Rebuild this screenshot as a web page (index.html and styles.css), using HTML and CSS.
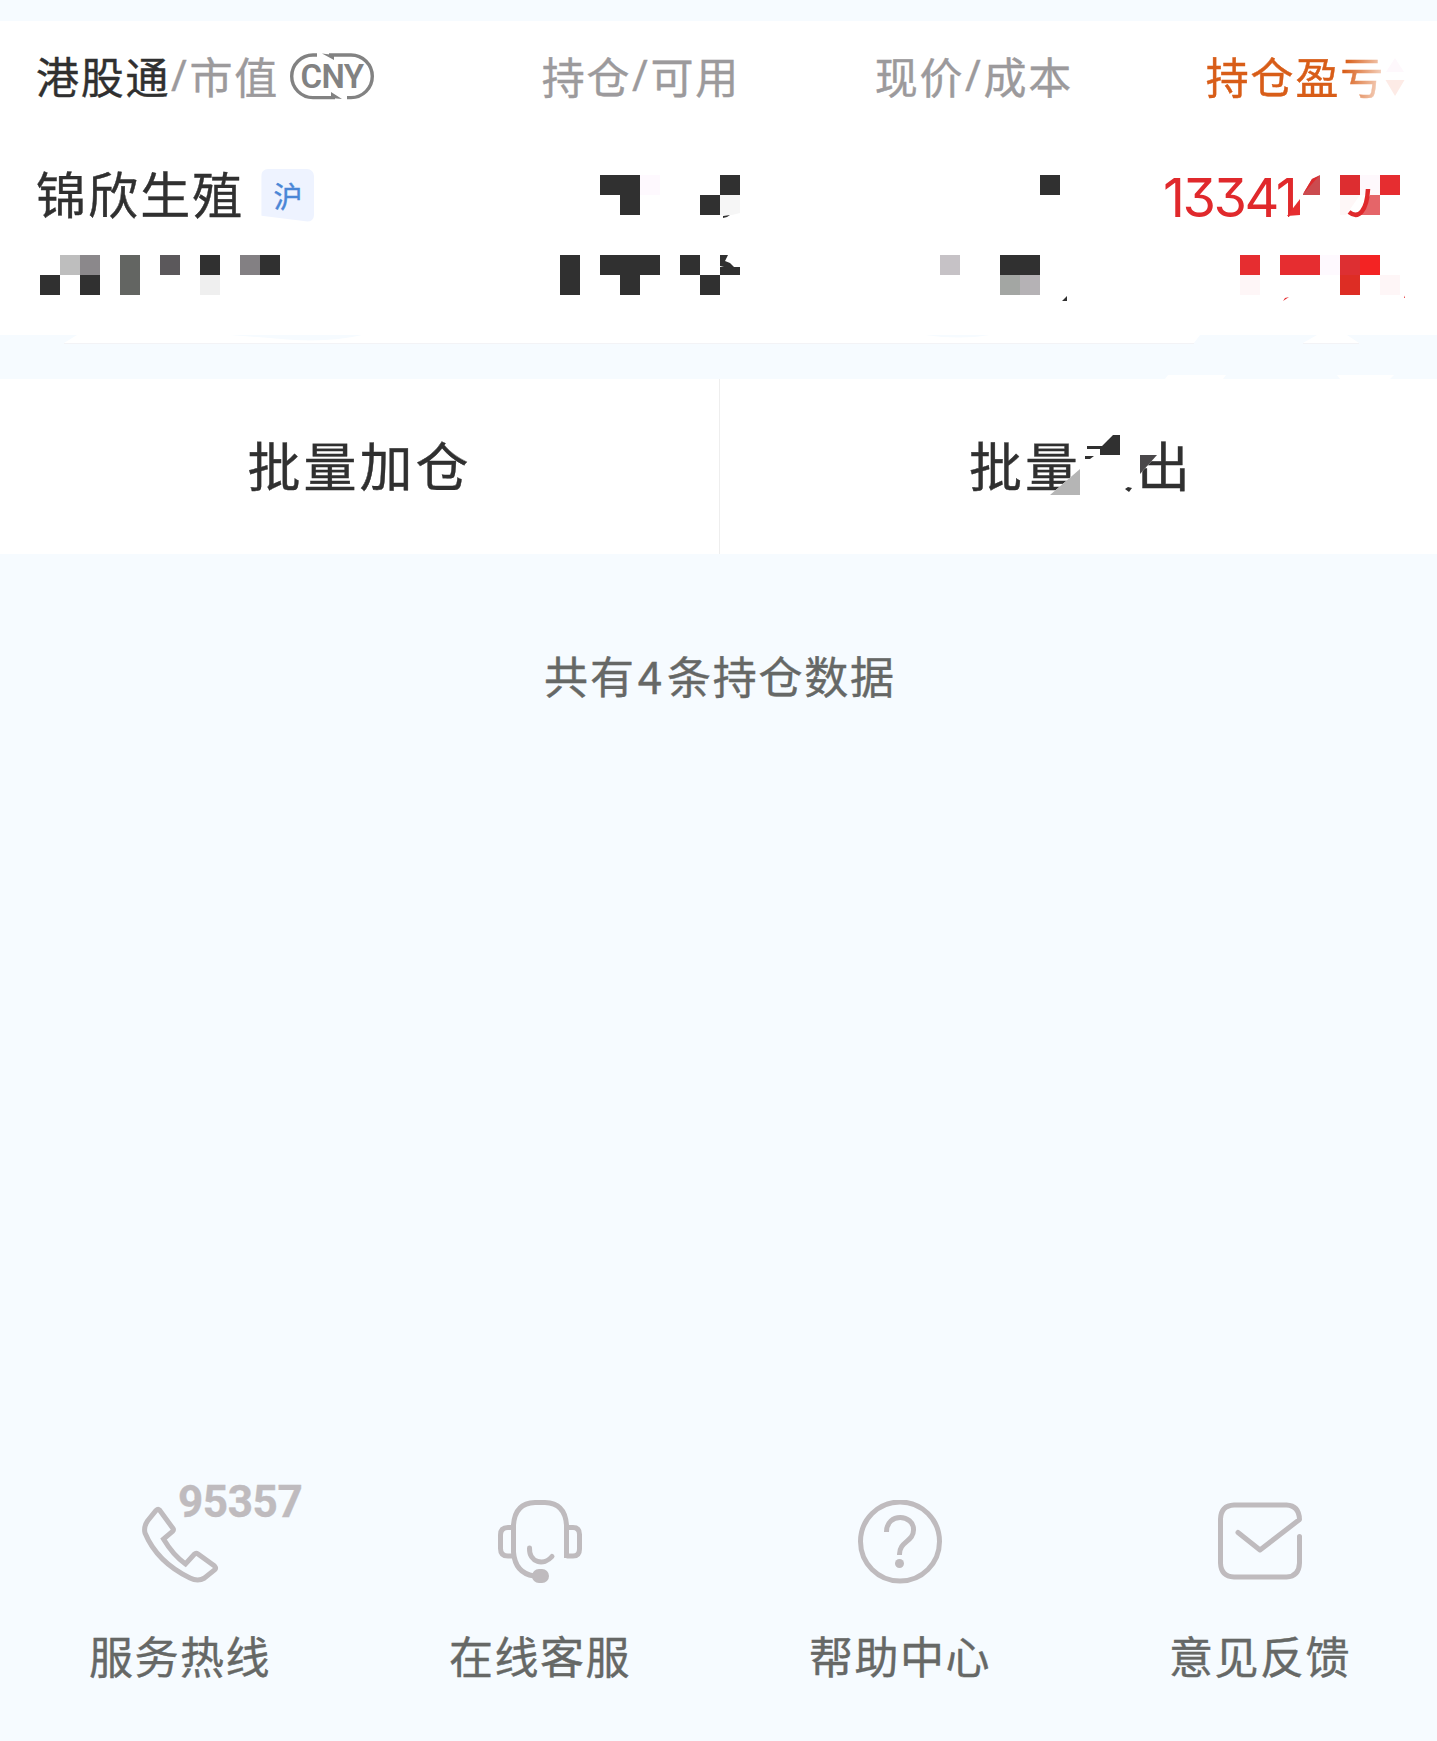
FILE: index.html
```html
<!doctype html>
<html lang="zh-CN">
    <head>
        <meta charset="utf-8">
        <title>港股通持仓</title>
        <meta name="viewport" content="width=device-width, initial-scale=1">
        <link rel="stylesheet" href="styles.css">
    </head>
    <body>
        <main>
            <section class="holdings">
                <div class="row head">
                    <div class="cell first">
                        <span class="market">港股通</span><span class="slash">/</span><span>市值</span>
                        <span class="currency">
                            <svg width="84" height="47" viewBox="0 0 84 47" fill="none" stroke="#828282" stroke-width="3.400">
                                <path d="M27 2H23A21.300 21.300 0 0 0 23 44.600H45"/>
                                <path d="M39 2H61A21.300 21.300 0 0 1 61 44.600H57"/>
                                <path d="M32 0.500L44 7V2zM52 46L41 39V45z" fill="#828282" stroke="none"/>
                            </svg>
                            <b>CNY</b>
                        </span>
                    </div>
                    <div class="cell">持仓<span class="slash">/</span>可用</div>
                    <div class="cell">现价<span class="slash">/</span>成本</div>
                    <div class="cell sorted">
                        <span class="fade">持仓盈亏</span>
                        <svg class="sort" width="20" height="40" viewBox="0 0 20 40">
                            <path d="M10 1L19 15H1z" fill="#fef8fc"/>
                            <path d="M0.500 23H19.500L10 39z" fill="#fdebe6"/>
                        </svg>
                    </div>
                </div>
                <div class="row line-one">
                    <div class="cell first">
                        <span class="name">锦欣生殖</span>
                        <span class="tag">沪</span>
                    </div>
                    <div class="cell">
                        <svg width="140" height="50" viewBox="600 170 140 50" fill="#303030">
                            <path d="M600 175h40v40h-20v-20h-20zM720 175h20v20h-20v20h-20v-20h20z"/>
                            <path d="M640 175h20v20h-20z" fill="#fef9fe"/>
                            <path d="M720 195h20v18l-8 2h-12z" fill="#f6f6f6"/>
                            <path d="M723 216l7-1-3 2-4 1z"/>
                        </svg>
                    </div>
                    <div class="cell">
                        <svg width="33" height="50" viewBox="1040 170 33 50">
                            <path d="M1040 175h20v20h-20z" fill="#303030"/>
                        </svg>
                    </div>
                    <div class="cell profit">
                        <span class="amount">13341</span>
                        <svg class="profit-cover" width="125" height="50" viewBox="1280 170 125 50">
                            <path d="M1287 220L1303 195 1320 175V220H1287z" fill="#fff"/>
                            <path d="M1303 194L1312 179 1320 175V195h-17z" fill="#cb4b4f"/>
                            <path d="M1303 194L1312 179 1319 176z" fill="#dd2a2d"/>
                            <path d="M1287 216L1300 199V215z" fill="#e62d30"/>
                            <path d="M1340 175h20v20h-20z" fill="#dd2d30"/>
                            <path d="M1380 175h20v20h-20z" fill="#e62d30"/>
                            <path d="M1360 175h20v20h-20z" fill="#fef8fc"/>
                            <path d="M1340 195h20l-14 20h-6z" fill="#fef7f7"/>
                            <path d="M1370 195h10v20h-20z" fill="#e56569"/>
                            <path d="M1349 212C1359 220 1367 210 1368 189" fill="none" stroke="#e0292c" stroke-width="4.500"/>
                        </svg>
                    </div>
                </div>
                <div class="row line-two">
                    <div class="cell first">
                        <svg width="245" height="50" viewBox="37 255 245 50" fill="#303030">
                            <path d="M40 275h20v20h-20zM80 275h20v20h-20zM200 255h20v20h-20zM260 255h20v20h-20z"/>
                            <path d="M60 255h20v20h-20z" fill="#bebebe"/>
                            <path d="M80 255h20v20h-20z" fill="#8b888b"/>
                            <path d="M120 255h20v40h-20z" fill="#636562"/>
                            <path d="M160 255h20v20h-20z" fill="#5b585b"/>
                            <path d="M200 275h20v20h-20z" fill="#efefef"/>
                            <path d="M240 255h20v20h-20z" fill="#838083"/>
                        </svg>
                    </div>
                    <div class="cell">
                        <svg width="180" height="50" viewBox="560 255 180 50" fill="#303030">
                            <path d="M560 255h20v40h-20zM600 255h60v20h-20v20h-20v-20h-20zM680 255h20v20h20v20h-20v-20h-20z"/>
                            <path d="M720 255h8l-3 6 5 2 4 4h6v8h-20v-8h4l-4-1z"/>
                        </svg>
                    </div>
                    <div class="cell">
                        <svg width="133" height="50" viewBox="940 255 133 50" fill="#303030">
                            <path d="M940 255h20v20h-20z" fill="#c6c2c6"/>
                            <path d="M1000 255h40v20h-40zM1067 296v5h-5z"/>
                            <path d="M1000 275h20v20h-20z" fill="#a3a6a3"/>
                            <path d="M1020 275h20v20h-20z" fill="#b5b2b5"/>
                        </svg>
                    </div>
                    <div class="cell">
                        <svg width="165" height="50" viewBox="1240 255 165 50" fill="#e62d30">
                            <path d="M1240 255h20v20h-20zM1280 255h40v20h-40z"/>
                            <path d="M1240 275h20v20h-20zM1380 275h20v20h-20z" fill="#fef6f7"/>
                            <path d="M1320 255h20v20h-20z" fill="#fef9fe"/>
                            <path d="M1340 255h20v20h-20z" fill="#dd2f32"/>
                            <path d="M1360 255h20v20h-20z" fill="#f32323"/>
                            <path d="M1340 275h20v20h-20z" fill="#dd2d24"/>
                            <path d="M1283 301l2-3 4-1-3 2zM1404 298l2-5-1 5z"/>
                        </svg>
                    </div>
                </div>
            </section>

            <svg class="gap" width="1437" height="44" viewBox="0 335 1437 44">
                <path d="M64 343L77 335H1200L1194 343zM1303 343L1317 335H1347L1359 343z" fill="#fff"/>
                <path d="M64 343.500H1194M1303 343.500H1359" stroke="#f3f3f6"/>
                <path d="M230 335H362Q325 344 270 338zM925 335H990Q960 340 925 335z" fill="#f6fbff"/>
                <path d="M1165 379L1168 375H1226L1223 379zM1340 379L1337 375H1394L1390 379z" fill="#fff"/>
            </svg>

            <section class="actions">
                <div class="action">批量加仓</div>
                <div class="action sell">
                    <span>批量卖出</span>
                    <svg class="sell-cover" width="120" height="70" viewBox="1040 430 120 70" fill="#303030">
                        <path d="M1080 430H1141V500H1048L1050 495 1080 469z" fill="#fff"/>
                        <path d="M1141 430H1166L1157 455 1140 474z" fill="#fff"/>
                        <path d="M1050 495L1080 469V495z" fill="#b5b5b5"/>
                        <path d="M1087 446h15l6-6 5-5h7v20h-20v-6h-13zM1085 456h9l-4 3h-5z"/>
                        <path d="M1125 489l3-2 4 1-3 4z"/>
                        <path d="M1140 455H1157L1140 474z" fill="#4a484a"/>
                    </svg>
                </div>
            </section>

            <p class="summary">共有<span>4</span>条持仓数据</p>
        </main>

        <footer>
            <div class="link">
                <span class="icon">
                    <svg width="84" height="84" viewBox="-2 -1 84 84">
                        <path d="M19.500 9L33 27.500Q34 29 32.500 30.500L23.500 38Q33 54 45.500 63L54.500 53Q56 51.500 58 53L74.500 65Q76.500 67 74.500 69L64.500 77Q58 81 50 77Q17 61 5 32Q3.500 26 7.500 20L16 9.500Q18 7.500 19.500 9z"/>
                    </svg>
                    <b class="hotline">95357</b>
                </span>
                <span>服务热线</span>
            </div>
            <div class="link">
                <span class="icon">
                    <svg width="84" height="84" viewBox="0 0 84 84">
                        <path d="M15.500 27.500H10Q2.500 27.500 2.500 35V48.500Q2.500 56 10 56H15.500M68.500 56H75Q81.500 56 81.500 49V34.500Q81.500 27.500 75 27.500H68.500M68.500 58V25Q67 3 47 2.500H37Q17 3 15.500 25V52Q17 73 36 76"/>
                        <path d="M31.500 48C31 63 46 66 54 56.500" stroke-linecap="round"/>
                        <rect x="34" y="69" width="17" height="14" rx="7" fill="#bfbbbe" stroke="none"/>
                    </svg>
                </span>
                <span>在线客服</span>
            </div>
            <div class="link">
                <span class="icon">
                    <svg width="84" height="84" viewBox="0 0 84 84">
                        <circle cx="42" cy="41.500" r="39.500"/>
                        <path d="M28.500 32C28.500 12 56 14 55.500 30C55.500 42 41 41 41.500 55"/>
                        <circle cx="41.500" cy="63.500" r="4.500" fill="#bfbbbe" stroke="none"/>
                    </svg>
                </span>
                <span>帮助中心</span>
            </div>
            <div class="link">
                <span class="icon">
                    <svg width="84" height="84" viewBox="0 1 84 84">
                        <path d="M81.500 37.500V64Q81 77.500 68.500 78H16Q3 77.500 2.500 64V20Q3 6.500 16 6H68.500Q81 6.500 81.500 20.500L42 51 20 33.500" stroke-linecap="round" stroke-linejoin="round"/>
                    </svg>
                </span>
                <span>意见反馈</span>
            </div>
        </footer>
    </body>
</html>
```
FILE: styles.css
```css
* {
    box-sizing: border-box;
    padding: 0;
    margin: 0;
}

body {
    background: #f6fbff;
    font-family: "Noto Sans CJK SC", sans-serif;
    color: #303030;
    -webkit-text-stroke: 0.4px;
    min-height: 1741px;
    display: flex;
    flex-direction: column;
}

svg {
    display: block;
    flex: none;
}

main {
    flex: 1;
    padding-top: 21px;
}

.holdings {
    background: #fff;
    height: 314px;
}

.row {
    display: grid;
    grid-template-columns: 503px 200px 333px 332px;
    padding-left: 37px;
}

.cell {
    display: flex;
    align-items: center;
    justify-content: flex-end;
    white-space: nowrap;
}

.first {
    justify-content: flex-start;
}

.head {
    height: 112px;
    font-size: 43px;
    line-height: 60px;
    letter-spacing: 1.8px;
    color: #9c9a9c;
}

.head .cell {
    padding-bottom: 5px;
}

.head .first {
    margin-left: -1px;
}

.market {
    color: #303030;
}

.slash {
    width: 19px;
    font-family: "Open Sans", sans-serif;
    text-align: center;
}

.currency {
    position: relative;
    top: 2px;
    margin-left: 11px;
}

.currency b {
    position: absolute;
    left: 0;
    top: 0;
    width: 100%;
    line-height: 47px;
    text-align: center;
    font-family: Roboto, sans-serif;
    font-size: 33px;
    font-weight: 600;
    letter-spacing: -0.5px;
    color: #828282;
    -webkit-text-stroke: 0;
}

.sorted {
    color: #d85d18;
}

.fade {
    -webkit-mask-image: linear-gradient(100deg, #000 75%, rgba(0,0,0,0.2) 98%);
    mask-image: linear-gradient(100deg, #000 75%, rgba(0,0,0,0.2) 98%);
}

.sort {
    margin-top: 4px;
}

.line-one {
    height: 122px;
    align-items: start;
}

.line-one .cell {
    height: 50px;
    margin-top: 37px;
}

.name {
    margin: -6px 0 0 -1px;
    font-size: 50px;
    letter-spacing: 2.1px;
    line-height: 50px;
}

.tag {
    width: 53px;
    height: 53px;
    margin-left: 17px;
    background: #eef3ff;
    border-radius: 7px;
    clip-path: polygon(0 0, 100% 0, 100% 100%, 87% 100%, 0 89%);
    font-size: 29px;
    line-height: 53px;
    text-align: center;
    color: #4a86d6;
}

.profit {
    position: relative;
}

.amount {
    width: 242px;
    padding-top: 5px;
    font-family: Inter, sans-serif;
    font-feature-settings: "cv09";
    font-size: 54px;
    line-height: 50px;
    letter-spacing: -2.5px;
    color: #e0292c;
    -webkit-text-stroke: 0;
}

.profit-cover {
    position: absolute;
    right: 0;
    top: 0;
}

.gap {
    width: 100%;
}

.actions {
    display: flex;
    height: 175px;
    background: #fff;
    overflow: hidden;
}

.action {
    flex: 0 0 720px;
    display: flex;
    align-items: center;
    justify-content: center;
    padding-bottom: 5px;
    font-size: 53px;
    letter-spacing: 3px;
    border-right: 1px solid #eee;
}

.sell {
    position: relative;
    padding-left: 2px;
    border: 0;
}

.sell-cover {
    position: absolute;
    left: 320px;
    top: 51px;
}

.summary {
    margin-top: 88px;
    padding-left: 3px;
    font-size: 44px;
    line-height: 66px;
    letter-spacing: 1.8px;
    text-align: center;
    color: #666866;
}

.summary span {
    margin: 0 3px 0 2px;
}

footer {
    display: grid;
    grid-template-columns: repeat(4, 360px);
    height: 241px;
    overflow: hidden;
    padding-top: 30px;
    margin-top: -30px;
    height: 271px;
}

.link {
    display: flex;
    flex-direction: column;
    align-items: center;
    font-size: 44px;
    line-height: 60px;
    letter-spacing: 1.5px;
    color: #666866;
}

.icon {
    position: relative;
    height: 84px;
    margin-bottom: 41px;
}

.icon svg {
    fill: none;
    stroke: #bfbbbe;
    stroke-width: 5;
}

.hotline {
    position: absolute;
    left: 40px;
    top: -28px;
    font-family: Roboto, sans-serif;
    font-size: 44px;
    line-height: 60px;
    letter-spacing: -0.4px;
    color: #bfbbbe;
}
```
